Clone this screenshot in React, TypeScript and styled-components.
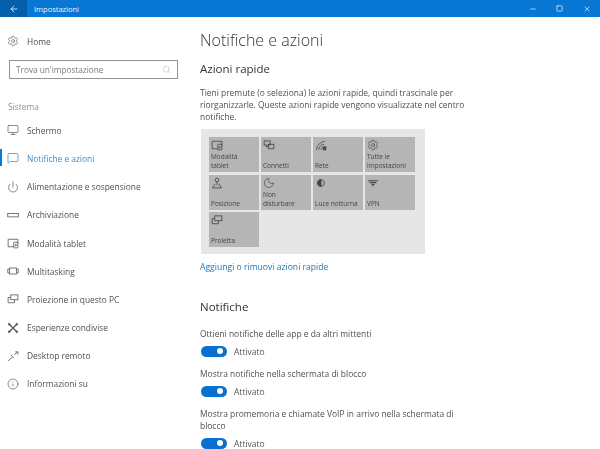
import React from "react";
import styled, { createGlobalStyle } from "styled-components";
import {
  ArrowLeft,
  Minus,
  Square,
  X,
  Settings,
  Search,
  Monitor,
  MessageSquare,
  Power,
  Moon,
  Info,
} from "lucide-react";

const GlobalStyle = createGlobalStyle`
  html, body {
    margin: 0;
    padding: 0;
    height: 100%;
    overflow: hidden;
    background: #fff;
  }
  * { box-sizing: border-box; }
  body {
    font-family: "Open Sans", "Noto Sans", "Liberation Sans", sans-serif;
    color: #444;
  }
`;

const Svg: React.FC<{ size?: number; children: React.ReactNode }> = ({ size = 12, children }) => (
  <svg width={size} height={size} viewBox="0 0 16 16" fill="none" stroke="currentColor" strokeWidth="1.1">
    {children}
  </svg>
);

const StorageIcon = () => (
  <Svg>
    <rect x="1" y="6" width="14" height="4.5" />
  </Svg>
);
const TabletIcon = () => (
  <Svg>
    <path d="M9 13H1.5V3h13v6" />
    <rect x="9" y="7" width="5.5" height="7.5" rx="0.8" />
    <circle cx="11.7" cy="11" r="1" />
  </Svg>
);
const MultitaskIcon = () => (
  <Svg>
    <rect x="3.5" y="4" width="9" height="8" />
    <path d="M3.5 5.5H1v5h2.5M12.5 5.5H15v5h-2.5" />
  </Svg>
);
const ProjectIcon = () => (
  <Svg>
    <rect x="5" y="2.5" width="9.5" height="6.5" />
    <path d="M5 6H1.5v7H10V9" />
  </Svg>
);
const ShareIcon = () => (
  <Svg>
    <path strokeWidth="1.8" d="M3 3l10 10M13 3L3 13" />
    <circle cx="3" cy="3" r="1.2" fill="currentColor" />
    <circle cx="13" cy="3" r="1.2" fill="currentColor" />
    <circle cx="3" cy="13" r="1.2" fill="currentColor" />
    <circle cx="13" cy="13" r="1.2" fill="currentColor" />
  </Svg>
);
const RemoteIcon = () => (
  <Svg>
    <path d="M1.5 14.5L7 9.5M5 6l4 5M9.5 6.5L14.5 2M11 2.5h3.5V6" />
  </Svg>
);
const ConnectIcon = () => (
  <Svg>
    <rect x="1.5" y="2.5" width="8" height="5.5" />
    <rect x="7.5" y="7" width="7" height="6" />
    <path d="M4 8v2.5h3" />
  </Svg>
);
const NetworkIcon = () => (
  <Svg>
    <path d="M2 14.5C2 9 7 4 13 3M5 14.5c0-3.5 3-7 7-7.5M8 14.5c0-2 1.5-3.5 4-4" />
    <rect x="11" y="10.5" width="3.5" height="4" fill="currentColor" />
  </Svg>
);
const LocationIcon = () => (
  <Svg>
    <circle cx="8" cy="4" r="2.5" />
    <path d="M8 6.5V11M5.5 9L2 14.5h12L10.5 9" />
  </Svg>
);
const NightIcon = () => (
  <Svg>
    <circle cx="8" cy="8" r="4.5" />
    <path d="M8 3.5a4.5 4.5 0 0 0-4.5 4.5A4.5 4.5 0 0 0 8 12.5z" fill="currentColor" />
  </Svg>
);
const VpnIcon = () => (
  <Svg>
    <path strokeWidth="1.5" d="M1.5 5h13M3.5 7.5h9M6 10h4" />
    <path d="M8 10v3" />
  </Svg>
);

const navItems = [
  { label: "Schermo", icon: <Monitor size={12} strokeWidth={1.4} /> },
  { label: "Notifiche e azioni", icon: <MessageSquare size={12} strokeWidth={1.4} />, active: true },
  { label: "Alimentazione e sospensione", icon: <Power size={12} strokeWidth={1.4} /> },
  { label: "Archiviazione", icon: <StorageIcon /> },
  { label: "Modalità tablet", icon: <TabletIcon /> },
  { label: "Multitasking", icon: <MultitaskIcon /> },
  { label: "Proiezione in questo PC", icon: <ProjectIcon /> },
  { label: "Esperienze condivise", icon: <ShareIcon /> },
  { label: "Desktop remoto", icon: <RemoteIcon /> },
  { label: "Informazioni su", icon: <Info size={12} strokeWidth={1.4} /> },
];

const tiles = [
  { label: "Modalità tablet", icon: <TabletIcon /> },
  { label: "Connetti", icon: <ConnectIcon /> },
  { label: "Rete", icon: <NetworkIcon /> },
  { label: "Tutte le impostazioni", icon: <Settings size={12} strokeWidth={1.3} /> },
  { label: "Posizione", icon: <LocationIcon /> },
  { label: "Non disturbare", icon: <Moon size={12} strokeWidth={1.3} /> },
  { label: "Luce notturna", icon: <NightIcon /> },
  { label: "VPN", icon: <VpnIcon /> },
  { label: "Proietta", icon: <ProjectIcon /> },
];

const App: React.FC = () => {
  return (
    <>
      <GlobalStyle />
      <Page>
        <TitleBar>
          <BackButton>
            <ArrowLeft size={10} strokeWidth={2} />
          </BackButton>
          <WindowTitle>Impostazioni</WindowTitle>
          <WindowControls>
            <Minus size={8} strokeWidth={2} />
            <Square size={7} strokeWidth={2.4} />
            <X size={8} strokeWidth={2} />
          </WindowControls>
        </TitleBar>
        <Body>
          <Sidebar>
            <NavRow>
              <IconSlot>
                <Settings size={12} strokeWidth={1.3} />
              </IconSlot>
              Home
            </NavRow>
            <SearchBox>
              Trova un'impostazione
              <Search size={9} strokeWidth={1.2} />
            </SearchBox>
            <GroupLabel>Sistema</GroupLabel>
            <NavList>
              {navItems.map((item) => (
                <NavRow key={item.label} $active={item.active}>
                  <IconSlot $active={item.active}>{item.icon}</IconSlot>
                  {item.label}
                </NavRow>
              ))}
            </NavList>
          </Sidebar>
          <Main>
            <PageTitle>Notifiche e azioni</PageTitle>
            <SectionTitle>Azioni rapide</SectionTitle>
            <Intro>
              Tieni premute (o seleziona) le azioni rapide, quindi trascinale per riorganizzarle. Queste azioni rapide
              vengono visualizzate nel centro notifiche.
            </Intro>
            <TilePanel>
              {tiles.map((tile) => (
                <Tile key={tile.label}>
                  {tile.icon}
                  <TileLabel>{tile.label}</TileLabel>
                </Tile>
              ))}
            </TilePanel>
            <LinkText>Aggiungi o rimuovi azioni rapide</LinkText>
            <NotifyTitle>Notifiche</NotifyTitle>
            <SettingList>
              <Setting>
                <Paragraph>Ottieni notifiche delle app e da altri mittenti</Paragraph>
                <ToggleRow>
                  <Toggle />
                  Attivato
                </ToggleRow>
              </Setting>
              <Setting>
                <Paragraph>Mostra notifiche nella schermata di blocco</Paragraph>
                <ToggleRow>
                  <Toggle />
                  Attivato
                </ToggleRow>
              </Setting>
              <Setting>
                <Paragraph>Mostra promemoria e chiamate VoIP in arrivo nella schermata di blocco</Paragraph>
                <ToggleRow>
                  <Toggle />
                  Attivato
                </ToggleRow>
              </Setting>
            </SettingList>
          </Main>
        </Body>
      </Page>
    </>
  );
};

export default App;

const Page = styled.div`
  width: 600px;
  height: 449px;
  overflow: hidden;
  display: flex;
  flex-direction: column;
  filter: blur(0.45px);
`;

const TitleBar = styled.header`
  height: 17px;
  flex: none;
  display: flex;
  align-items: center;
  background: #0878d4;
  color: #e8f3fc;
`;

const BackButton = styled.div`
  width: 27px;
  height: 100%;
  display: flex;
  align-items: center;
  justify-content: center;
  background: #0560ab;
`;

const WindowTitle = styled.span`
  margin-left: 7px;
  font-size: 7.5px;
`;

const WindowControls = styled.div`
  margin-left: auto;
  width: 81px;
  display: grid;
  grid-template-columns: repeat(3, 1fr);
  justify-items: center;
  align-items: center;
`;

const Body = styled.div`
  flex: 1;
  display: flex;
`;

const Sidebar = styled.nav`
  width: 200px;
  flex: none;
  padding-top: 10px;
`;

const NavList = styled.div`
  display: flex;
  flex-direction: column;
`;

const NavRow = styled.div<{ $active?: boolean }>`
  position: relative;
  height: 28.2px;
  display: flex;
  align-items: center;
  padding-left: 7px;
  font-size: 8.4px;
  color: ${({ $active }) => ($active ? "#3a8fcb" : "#505050")};

  &::before {
    content: "";
    display: ${({ $active }) => ($active ? "block" : "none")};
    position: absolute;
    left: 0;
    top: 5px;
    width: 2px;
    height: 17px;
    background: #0f78d0;
  }
`;

const IconSlot = styled.span<{ $active?: boolean }>`
  width: 20px;
  display: flex;
  align-items: center;
  flex: none;
  color: ${({ $active }) => ($active ? "#2a86c8" : "#5a5a5a")};
`;

const SearchBox = styled.div`
  width: 169px;
  height: 19px;
  margin: 5px 0 0 9px;
  padding: 0 6px;
  display: flex;
  align-items: center;
  justify-content: space-between;
  border: 1.5px solid #939393;
  font-size: 8.25px;
  color: #7c7c7c;
  svg {
    color: #aaa;
  }
`;

const GroupLabel = styled.div`
  height: 14px;
  margin: 21px 0 2px 8px;
  line-height: 14px;
  font-size: 8.4px;
  color: #8e8e8e;
`;

const Main = styled.main`
  flex: 1;
  padding-top: 11px;
`;

const PageTitle = styled.h1`
  margin: 0;
  font-size: 16px;
  line-height: 24px;
  font-weight: 300;
  color: #333;
`;

const SectionTitle = styled.h2`
  margin: 9px 0 0;
  font-size: 11.5px;
  line-height: 16px;
  font-weight: 400;
  color: #333;
`;

const NotifyTitle = styled(SectionTitle)`
  margin-top: 26px;
`;

const Paragraph = styled.p`
  margin: 0;
  width: 268px;
  font-size: 8.45px;
  line-height: 12px;
  color: #505050;
`;

const Intro = styled(Paragraph)`
  margin-top: 10px;
`;

const TilePanel = styled.div`
  width: 224px;
  height: 125px;
  margin: 6px 0 0 1px;
  padding: 8px 10px 0 8px;
  display: grid;
  grid-template-columns: repeat(4, 49.5px);
  grid-auto-rows: 35px;
  gap: 2.5px;
  background: #e6e6e6;
`;

const Tile = styled.div`
  display: flex;
  flex-direction: column;
  justify-content: space-between;
  padding: 2px 1px 2px 2px;
  background: #b5b5b5;
  color: #444;
`;

const TileLabel = styled.span`
  max-width: 43.5px;
  font-size: 6.5px;
  line-height: 9px;
  color: #444;
`;

const LinkText = styled.div`
  margin-top: 7px;
  font-size: 8.6px;
  line-height: 12px;
  color: #1a78bd;
`;

const SettingList = styled.div`
  display: flex;
  flex-direction: column;
  gap: 10px;
  margin-top: 13px;
`;

const Setting = styled.section``;

const ToggleRow = styled.div`
  height: 14px;
  margin-top: 4px;
  display: flex;
  align-items: center;
  gap: 7px;
  padding-left: 1px;
  font-size: 8.5px;
  color: #555;
`;

const Toggle = styled.span`
  position: relative;
  width: 26px;
  height: 11px;
  border-radius: 6px;
  background: #0a70cf;

  &::after {
    content: "";
    position: absolute;
    top: 2.5px;
    right: 4px;
    width: 6px;
    height: 6px;
    border-radius: 50%;
    background: #fff;
  }
`;
